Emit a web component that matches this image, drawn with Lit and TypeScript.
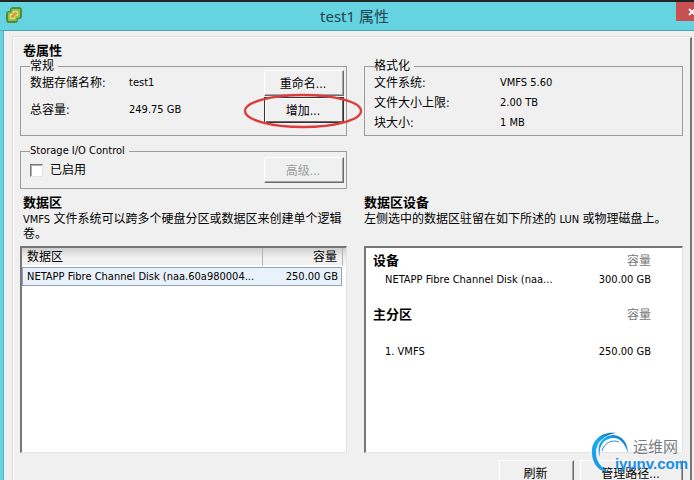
import { LitElement, html, css } from "lit";
import { customElement, property } from "lit/decorators.js";

@customElement("app-watermark")
class AppWatermark extends LitElement {
  static styles = css`
    :host {
      display: flex;
      pointer-events: none;
    }
    .swirl { width: 44px; height: 46px; flex: none; }
    .words {
      display: flex;
      flex-direction: column;
      margin-left: -18px;
      padding-top: 7px;
    }
    .name {
      font: 15px/18px "Noto Sans CJK SC", sans-serif;
      color: #777b80;
      padding-left: 18px;
    }
    .site {
      font: bold 15px/18px "Liberation Sans", sans-serif;
      color: #1b8fe6;
    }
  `;
  render() {
    return html`
      <svg class="swirl" viewBox="0 0 44 46" aria-hidden="true">
        <defs>
          <linearGradient id="g" x1="0" y1="1" x2="1" y2="0">
            <stop offset="0" stop-color="#1c8be0" />
            <stop offset=".5" stop-color="#16b0f4" />
            <stop offset="1" stop-color="#1466b4" />
          </linearGradient>
        </defs>
        <path fill="url(#g)" d="M27 3C12 1 2 11 3 23C3 33 10 42 19 42C12 37 7 31 7 23C7 12 15 5 27 3Z" />
        <path fill="url(#g)" d="M11 27C6 14 15 5 25 5C34 6 39 14 39 23C36 14 31 8 25 8C15 8 9 16 11 27Z" />
        <path fill="none" stroke="#2b8fd8" d="M13 21C15 13 23 9 30 12" />
      </svg>
      <span class="words"><span class="name">运维网</span><span class="site">iyunv.com</span></span>
    `;
  }
}

@customElement("app-root")
class AppRoot extends LitElement {
  @property() name = "test1";

  static styles = css`
    :host {
      display: flex;
      flex-direction: column;
      box-sizing: border-box;
      height: 100vh;
      overflow: hidden;
      border-top: 2px solid #222426;
      background: #66d3e0;
      color: #000;
      font: 12px/14px "DejaVu Sans Condensed", "Noto Sans CJK SC", sans-serif;
    }
    .titlebar {
      display: grid;
      grid-template-columns: 80px 1fr 65px;
      flex: none;
      height: 29px;
      border-bottom: 1px solid #4fa9b8;
      box-sizing: border-box;
    }
    .logo { width: 18px; height: 18px; margin: 4px 0 0 5px; }
    h1 {
      margin: 0;
      text-align: center;
      font: 15px/28px "Noto Sans", "Noto Sans CJK SC", sans-serif;
      color: #1d4450;
    }
    .close {
      justify-self: end;
      width: 18px;
      height: 19px;
      padding: 0 0 0 12px;
      border: 0;
      background: #c75050;
      overflow: hidden;
      display: flex;
      align-items: center;
    }
    .close svg { width: 8px; height: 8px; flex: none; }
    .body {
      flex: 1 0 auto;
      margin-left: 3px;
      padding: 6px 2px 0 9px;
      background: #f0f0f0;
      border-left: 1px solid #5ab5c2;
    }
    .panel {
      border-top: 1px solid #fff;
      border-left: 1px solid #fff;
      border-right: 2px solid #777;
      box-shadow: -1px -1px #dedede;
      padding: 4px 7px 0 6px;
      min-height: 100%;
      box-sizing: border-box;
    }
    h2 {
      margin: 0;
      font: bold 13px/17px "DejaVu Sans Condensed", "Noto Sans CJK SC", sans-serif;
    }
    .columns {
      display: grid;
      grid-template-columns: 327fr 319fr;
      column-gap: 17px;
    }
    .stack { display: flex; flex-direction: column; gap: 8px; }
    fieldset {
      box-sizing: border-box;
      min-width: 0;
      margin: 0;
      padding: 0 2px 0 9px;
      border: 1px solid #9c9c9c;
    }
    legend { padding: 0 4px 0 0; margin: 0 0 -3px; line-height: 14px; }
    .tall { height: 77px; }
    .small { height: 45px; }
    .latin { font-size: 11px; }
    .facts {
      display: grid;
      grid-template-columns: 99px 1fr 80px;
      grid-auto-rows: 26px;
      row-gap: 1px;
      align-items: center;
    }
    .specs {
      display: grid;
      grid-template-columns: 126px 1fr;
      grid-auto-rows: 20px;
      align-items: center;
      margin: 3px 0 0;
    }
    .specs dd { margin: 0; }
    button.push {
      box-sizing: border-box;
      height: 26px;
      padding: 1px 2px 0 0;
      border: 1px solid;
      border-color: #fff #6b6b6b #6b6b6b #fff;
      box-shadow: inset -1px -1px #a5a5a5;
      background: #f0f0f0;
      color: #000;
      font: inherit;
    }
    button.push:disabled { color: #9b9b9b; }
    button.default {
      border-color: #333;
      box-shadow: inset 1px 1px #fff, inset -1px -1px #6b6b6b;
    }
    .ringed { position: relative; display: grid; }
    .ring {
      position: absolute;
      left: -21px;
      top: -4px;
      width: 120px;
      height: 36px;
      pointer-events: none;
    }
    .control { display: flex; justify-content: space-between; align-items: center; margin-top: 2px; }
    .control .push { width: 80px; }
    .check { display: flex; align-items: center; gap: 7px; }
    .check input {
      appearance: none;
      box-sizing: border-box;
      width: 13px;
      height: 13px;
      margin: 0;
      border: 1px solid;
      border-color: #777 #e3e3e3 #e3e3e3 #777;
      box-shadow: inset 1px 1px #b0b0b0;
      background: #fff;
    }
    .intro { padding: 5px 0; }
    .intro p { margin: 1px 0 0; line-height: 14px; min-height: 28px; }
    .indent { padding-left: 3px; }
    .list {
      box-sizing: border-box;
      height: 207px;
      background: #fff;
      border: 2px solid;
      border-color: #777 #e3e3e3 #e3e3e3 #777;
      border-right-width: 1px;
      border-bottom-width: 1px;
    }
    table { border-collapse: collapse; width: 100%; table-layout: fixed; }
    th, td { padding: 0; font-weight: normal; text-align: left; }
    .num { text-align: right; }
    .extents { border-collapse: separate; border-spacing: 0; }
    .extents th {
      height: 17px;
      background: linear-gradient(#cfcfcf, #f2f2f2 60%);
      border-bottom: 2px solid #fff;
      padding: 0 5px;
    }
    .extents th + th { border-left: 1px solid #b5b5b5; }
    .extents .end { padding: 0; }
    .extents td {
      height: 17px;
      background: #e9f1fa;
      border: 1px solid #8fa5b5;
      border-width: 1px 0;
      padding: 0 3px 0 4px;
      font-size: 11px;
      white-space: nowrap;
    }
    .extents td:first-child { border-left-width: 1px; }
    .extents td.num { border-right-width: 1px; }
    .extents td.end { background: #fff; border: 0; padding: 0; }
    .c-size { width: 80px; }
    .c-end { width: 4px; }
    .devices { padding: 2px 31px 0 7px; }
    .devices th { height: 22px; font-weight: bold; font-size: 13px; }
    .devices th.num { font-weight: normal; font-size: 12px; color: #777; }
    .devices td { height: 16px; font-size: 11px; white-space: nowrap; }
    .devices td:first-child { padding-left: 12px; }
    .devices tbody + tbody th { height: 53px; }
    .devices tbody + tbody td { height: 22px; }
    .c-cap { width: 90px; }
    .actions {
      display: grid;
      grid-template-columns: 75px 103px;
      justify-content: end;
      gap: 6px;
      padding-top: 7px;
    }
    app-watermark { position: absolute; right: 6px; bottom: 4px; }
  `;

  render() {
    return html`
      <header class="titlebar">
        <svg class="logo" viewBox="0 0 18 18" aria-hidden="true">
          <rect x="6" y="2" width="10" height="10" rx="2" fill="#a9cf56" stroke="#4c8f3a" stroke-width="2" />
          <rect x="2" y="6" width="10" height="10" rx="2" fill="#a9cf56" stroke="#4c8f3a" stroke-width="2" />
          <path d="M7 4H14V11H11V14H4V7H7Z" fill="#d5e08a" stroke="#8dba45" stroke-width="1.4" />
          <path d="M6.5 11.5L11.5 6.5" stroke="#e0982c" stroke-width="2.6" />
        </svg>
        <h1>${this.name} 属性</h1>
        <button class="close" aria-label="关闭">
          <svg viewBox="0 0 8 8"><path d="M1 1L7 7M7 1L1 7" stroke="#fff" stroke-width="1.8" /></svg>
        </button>
      </header>
      <main class="body">
        <div class="panel">
          <h2 class="indent">卷属性</h2>
          <div class="columns">
            <div class="stack">
              <fieldset class="tall">
                <legend>常规</legend>
                <div class="facts">
                  <span>数据存储名称:</span><span class="latin">${this.name}</span>
                  <button class="push">重命名...</button>
                  <span>总容量:</span><span class="latin">249.75 GB</span>
                  <span class="ringed">
                    <button class="push default">增加...</button>
                    <svg class="ring" viewBox="0 0 120 36" aria-hidden="true">
                      <ellipse cx="60" cy="18" rx="58" ry="16" fill="none" stroke="#dc3c3c" stroke-width="2.4" />
                    </svg>
                  </span>
                </div>
              </fieldset>
              <fieldset class="small">
                <legend class="latin">Storage I/O Control</legend>
                <div class="control">
                  <label class="check"><input type="checkbox" />已启用</label>
                  <button class="push" disabled>高级...</button>
                </div>
              </fieldset>
            </div>
            <fieldset class="tall">
              <legend>格式化</legend>
              <dl class="specs">
                <dt>文件系统:</dt><dd class="latin">VMFS 5.60</dd>
                <dt>文件大小上限:</dt><dd class="latin">2.00 TB</dd>
                <dt>块大小:</dt><dd class="latin">1 MB</dd>
              </dl>
            </fieldset>
            <section class="intro indent">
              <h2>数据区</h2>
              <p><span class="latin">VMFS</span> 文件系统可以跨多个硬盘分区或数据区来创建单个逻辑卷。</p>
            </section>
            <section class="intro">
              <h2>数据区设备</h2>
              <p>左侧选中的数据区驻留在如下所述的 <span class="latin">LUN</span> 或物理磁盘上。</p>
            </section>
            <div class="list">
              <table class="extents">
                <colgroup><col /><col class="c-size" /><col class="c-end" /></colgroup>
                <thead><tr><th>数据区</th><th class="num">容量</th><th class="end"></th></tr></thead>
                <tbody>
                  <tr><td>NETAPP Fibre Channel Disk (naa.60a980004...</td><td class="num">250.00 GB</td><td class="end"></td></tr>
                </tbody>
              </table>
            </div>
            <div class="list devices">
              <table>
                <colgroup><col /><col class="c-cap" /></colgroup>
                <tbody>
                  <tr><th>设备</th><th class="num">容量</th></tr>
                  <tr><td>NETAPP Fibre Channel Disk (naa...</td><td class="num">300.00 GB</td></tr>
                </tbody>
                <tbody>
                  <tr><th>主分区</th><th class="num">容量</th></tr>
                  <tr><td>1. VMFS</td><td class="num">250.00 GB</td></tr>
                </tbody>
              </table>
            </div>
          </div>
          <div class="actions">
            <button class="push">刷新</button>
            <button class="push">管理路径...</button>
          </div>
        </div>
      </main>
      <app-watermark></app-watermark>
    `;
  }
}
